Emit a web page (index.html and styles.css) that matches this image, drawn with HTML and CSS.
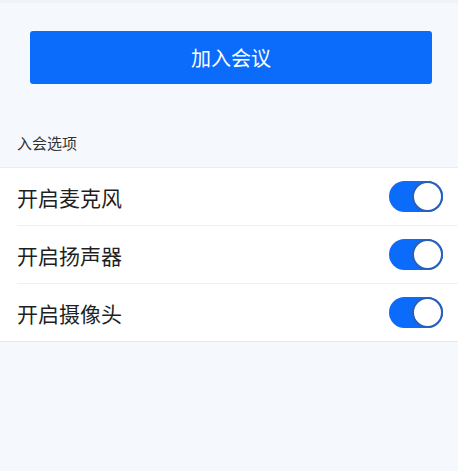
FILE: index.html
```html
<!DOCTYPE html>
<html lang="zh-CN">
<head>
    <meta charset="UTF-8">
    <meta name="viewport" content="width=device-width, initial-scale=1.0">
    <title>加入会议</title>
    <link rel="stylesheet" href="styles.css">
</head>
<body>
    <div class="page">
        <div class="actions">
            <div class="join-button">加入会议</div>
        </div>
        <div class="section-title">入会选项</div>
        <div class="options">
            <div class="option">
                <span class="option-label">开启麦克风</span>
                <span class="switch on"><span class="knob"></span></span>
            </div>
            <div class="option">
                <span class="option-label">开启扬声器</span>
                <span class="switch on"><span class="knob"></span></span>
            </div>
            <div class="option">
                <span class="option-label">开启摄像头</span>
                <span class="switch on"><span class="knob"></span></span>
            </div>
        </div>
    </div>
</body>
</html>
```

FILE: styles.css
```css
html, body {
    margin: 0;
    height: 100%;
}
body {
    font-family: "Noto Sans CJK SC", "Noto Sans", sans-serif;
    background-color: #f5f9fd;
    border-top: 3px solid #f0f2f5;
    box-sizing: border-box;
}
.actions {
    padding: 28px 26px 0 30px;
}
.join-button {
    height: 53px;
    line-height: 53px;
    border-radius: 3px;
    background-color: #0b6cfb;
    color: #fff;
    font-size: 20px;
    text-align: center;
}
.section-title {
    padding: 48px 17px 13px;
    line-height: 22px;
    font-size: 15px;
    color: #333;
}
.options {
    background-color: #fff;
    border-top: 1px solid #e9edf2;
    border-bottom: 1px solid #e4e8ee;
}
.option {
    display: flex;
    align-items: center;
    justify-content: space-between;
    height: 57px;
    margin-left: 17px;
    padding-right: 15px;
    border-bottom: 1px solid #eef0f3;
}
.option:last-child {
    border-bottom: none;
}
.option-label {
    font-size: 21px;
    color: #1f1f1f;
}
.switch {
    display: flex;
    align-items: center;
    justify-content: flex-end;
    width: 54px;
    height: 31px;
    border-radius: 16px;
    background-color: #0b6cfb;
}
.knob {
    width: 27px;
    height: 27px;
    border-radius: 50%;
    background-color: #fff;
    border: 2px solid #2a5fb8;
}
```
